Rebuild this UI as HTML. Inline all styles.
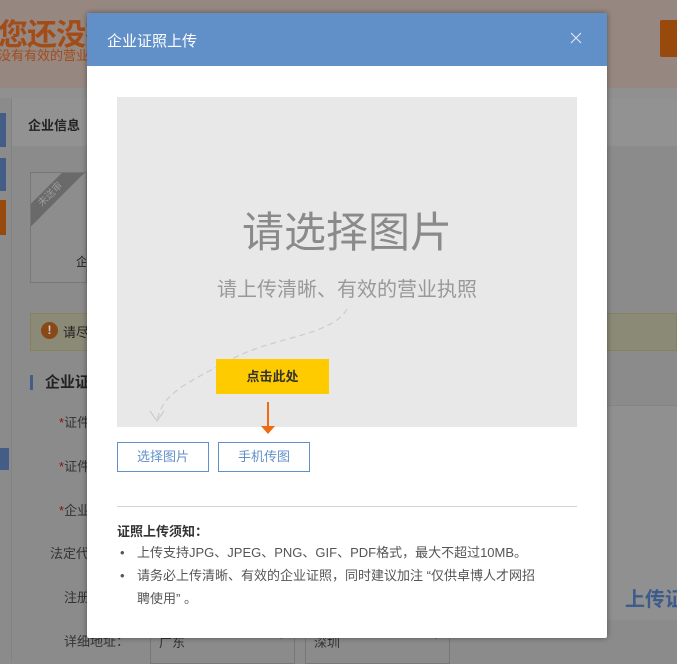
<!DOCTYPE html>
<html><head><meta charset="utf-8"><style>
*{margin:0;padding:0;box-sizing:border-box}
body{width:677px;height:662px;overflow:hidden;position:relative;background:#8b8b8b;font-family:"Liberation Sans","Noto Sans CJK SC",sans-serif}
.a{position:absolute}
</style></head><body>
<div class="a" style="left:0;top:0;width:677px;height:88px;background:#978781"></div>
<div class="a" style="left:-2px;top:10px;font-size:30px;font-weight:bold;color:#a24c18;letter-spacing:-1px">您还没有</div>
<div class="a" style="left:-2px;top:45px;font-size:13px;color:#a24c18">没有有效的营业</div>
<div class="a" style="left:660px;top:20px;width:20px;height:37px;background:#984a0c;border-radius:2px"></div>
<div class="a" style="left:0;top:88px;width:677px;height:10px;background:#909090"></div>
<div class="a" style="left:11px;top:98px;width:1px;height:564px;background:#828282"></div>
<div class="a" style="left:0;top:113px;width:6px;height:34px;background:#435d86"></div>
<div class="a" style="left:0;top:158px;width:6px;height:33px;background:#435d86"></div>
<div class="a" style="left:0;top:200px;width:6px;height:35px;background:#984a0c"></div>
<div class="a" style="left:0;top:448px;width:9px;height:22px;background:#435d86"></div>
<div class="a" style="left:12px;top:98px;width:665px;height:48px;background:#929292"></div>
<div class="a" style="left:28px;top:115px;font-size:13px;font-weight:bold;color:#222">企业信息</div>
<div class="a" style="left:30px;top:172px;width:57px;height:111px;border:1px solid #777;background:#8d8d8d;overflow:hidden">
<div class="a" style="left:-20px;top:14px;width:80px;height:16px;background:#6a6a6a;transform:rotate(-45deg);color:#999;font-size:10px;text-align:center;line-height:16px">未送审</div>
<div class="a" style="left:45px;top:80px;font-size:12px;color:#222">企</div></div>
<div class="a" style="left:30px;top:313px;width:647px;height:38px;background:#8b8a77;border:1px solid #87825d"></div>
<div class="a" style="left:41px;top:322px;width:17px;height:17px;border-radius:50%;background:#8a4818;color:#ccc;font-size:12px;font-weight:bold;text-align:center;line-height:17px">!</div>
<div class="a" style="left:63px;top:322px;font-size:13px;color:#222">请尽</div>
<div class="a" style="left:30px;top:375px;width:3px;height:15px;background:#435d86"></div>
<div class="a" style="left:45px;top:371px;font-size:15px;font-weight:bold;color:#222">企业证</div>
<div class="a" style="left:59px;top:412px;font-size:13px;color:#333"><span style="color:#8a1010">*</span>证件</div>
<div class="a" style="left:59px;top:456px;font-size:13px;color:#333"><span style="color:#8a1010">*</span>证件</div>
<div class="a" style="left:59px;top:500px;font-size:13px;color:#333"><span style="color:#8a1010">*</span>企业</div>
<div class="a" style="left:50px;top:543px;font-size:13px;color:#333">法定代</div>
<div class="a" style="left:64px;top:587px;font-size:13px;color:#333">注册</div>
<div class="a" style="left:64px;top:631px;font-size:13px;color:#333">详细地址：</div>
<div class="a" style="left:150px;top:628px;width:145px;height:36px;border:1px solid #777;font-size:13px;color:#333;padding:3px 8px">广东<span style="position:absolute;right:8px;top:2px;font-size:10px">▼</span></div>
<div class="a" style="left:305px;top:628px;width:145px;height:36px;border:1px solid #777;font-size:13px;color:#333;padding:3px 8px">深圳<span style="position:absolute;right:8px;top:2px;font-size:10px">▼</span></div>
<div class="a" style="left:607px;top:405px;width:70px;height:215px;background:#909090;border-top:1px solid #858585"></div>
<div class="a" style="left:625px;top:583px;font-size:20px;font-weight:bold;color:#3c5c8b;white-space:nowrap">上传证</div>

<div class="a" style="left:87px;top:13px;width:520px;height:625px;background:#fff;box-shadow:0 0 6px rgba(0,0,0,.4);border-radius:2px">
<div style="height:53px;background:#6190c9;color:#fff;font-size:15px;padding:17px 20px;position:relative">企业证照上传<svg style="position:absolute;right:25px;top:19px" width="12" height="12"><path d="M1 1L11 11M11 1L1 11" stroke="#dde6f4" stroke-width="1.2"/></svg></div>
<div class="a" style="left:30px;top:84px;width:460px;height:330px;background:#e8e8e8">
<div class="a" style="left:0;top:102px;width:460px;text-align:center;font-size:42px;color:#8a8a8a">请选择图片</div>
<div class="a" style="left:0;top:176px;width:460px;text-align:center;font-size:20px;color:#999">请上传清晰、有效的营业执照</div>
<svg class="a" style="left:0;top:0" width="460" height="330"><path d="M230 212 C215 240 150 240 110 265 C60 290 45 300 40 324" fill="none" stroke="#ccc" stroke-width="1.2" stroke-dasharray="6 4"/><path d="M33 314 L40 324 L47 314" fill="none" stroke="#ccc" stroke-width="1.2"/></svg>
<div class="a" style="left:99px;top:262px;width:113px;height:35px;background:#fecb00;text-align:center;line-height:35px;font-size:13px;font-weight:bold;color:#333">点击此处</div>
</div>
<div class="a" style="left:180px;top:389px;width:2px;height:27px;background:#f06b10"></div>
<div class="a" style="left:174px;top:413px;width:0;height:0;border-left:7px solid transparent;border-right:7px solid transparent;border-top:8px solid #f06b10"></div>
<div class="a" style="left:30px;top:429px;width:92px;height:30px;border:1px solid #6190c9;color:#6190c9;font-size:13px;text-align:center;line-height:28px">选择图片</div>
<div class="a" style="left:131px;top:429px;width:92px;height:30px;border:1px solid #6190c9;color:#6190c9;font-size:13px;text-align:center;line-height:28px">手机传图</div>
<div class="a" style="left:30px;top:493px;width:460px;height:1px;background:#d4d4d4"></div>
<div class="a" style="left:30px;top:508px;font-size:13px;font-weight:bold;color:#333">证照上传须知：</div>
<div class="a" style="left:30px;top:528px;width:470px;font-size:13px;color:#555;line-height:23px;white-space:nowrap">
<div style="padding-left:20px;position:relative"><span style="position:absolute;left:3px">•</span>上传支持JPG、JPEG、PNG、GIF、PDF格式，最大不超过10MB。</div>
<div style="padding-left:20px;position:relative"><span style="position:absolute;left:3px">•</span>请务必上传清晰、有效的企业证照，同时建议加注 “仅供卓博人才网招<br>聘使用” 。</div>
</div>
</div>
</body></html>
